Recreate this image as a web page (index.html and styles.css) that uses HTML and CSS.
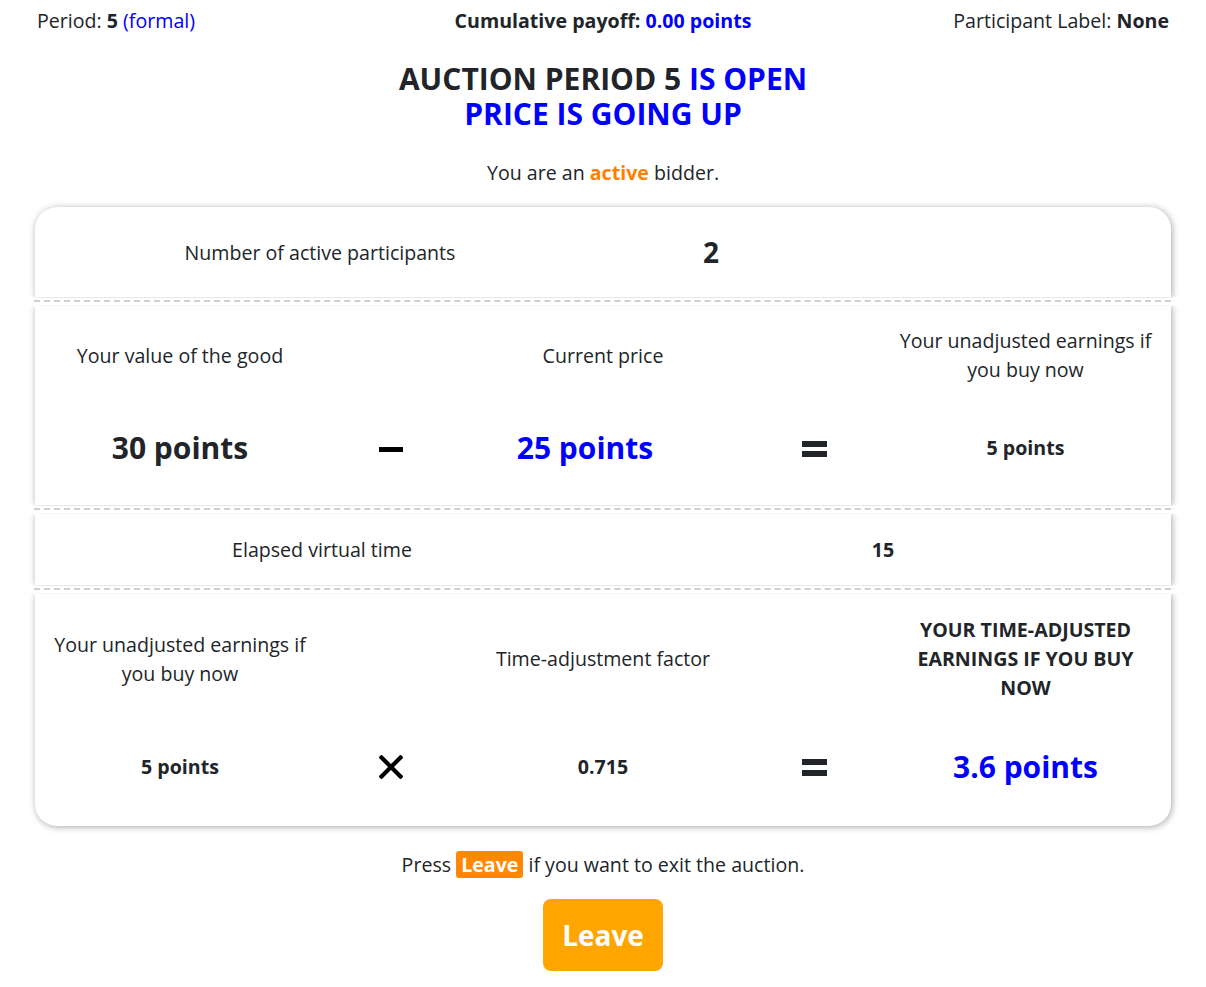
FILE: index.html
```html
<!DOCTYPE html>
<html lang="en">
<head>
<meta charset="utf-8">
<title>Auction</title>
<link rel="stylesheet" href="styles.css">
</head>
<body>
<div class="page">
  <div class="topbar">
    <div class="tb-left">Period: <b>5</b> <span class="blue">(formal)</span></div>
    <div class="tb-center"><b>Cumulative payoff: <span class="blue">0.00 points</span></b></div>
    <div class="tb-right">Participant Label: <b>None</b></div>
  </div>

  <h1 class="title">AUCTION PERIOD 5 <span class="blue">IS OPEN</span><br><span class="blue">PRICE IS GOING UP</span></h1>

  <p class="status">You are an <span class="orange">active</span> bidder.</p>

  <div class="card">
    <div class="sec sec-first row-participants">
      <div class="cell">Number of active participants</div>
      <div class="cell big-num">2</div>
      <div class="cell"></div>
    </div>
    <div class="sep"></div>
    <div class="sec calc calc-price">
      <div class="lab">Your value of the good</div>
      <div class="lab"></div>
      <div class="lab">Current price</div>
      <div class="lab"></div>
      <div class="lab">Your unadjusted earnings if you buy now</div>

      <div class="val big">30 points</div>
      <div class="val op">
        <svg width="24" height="24" viewBox="0 0 24 24"><rect x="0" y="11" width="24" height="5" fill="#000"/></svg>
      </div>
      <div class="val big blue price-val">25 points</div>
      <div class="val op">
        <svg width="25" height="24" viewBox="0 0 25 24"><rect x="0" y="5" width="25" height="6" fill="#212529"/><rect x="0" y="15" width="25" height="6" fill="#212529"/></svg>
      </div>
      <div class="val small">5 points</div>
    </div>
    <div class="sep"></div>
    <div class="sec row-time">
      <div class="cell">Elapsed virtual time</div>
      <div class="cell bold time-val">15</div>
    </div>
    <div class="sep"></div>
    <div class="sec sec-last calc calc-time">
      <div class="lab">Your unadjusted earnings if you buy now</div>
      <div class="lab"></div>
      <div class="lab">Time-adjustment factor</div>
      <div class="lab"></div>
      <div class="lab bold upper">Your time-adjusted earnings if you buy now</div>

      <div class="val small">5 points</div>
      <div class="val op">
        <svg width="24" height="24" viewBox="0 0 24 24"><path d="M2.5 2.5 L21.5 21.5 M21.5 2.5 L2.5 21.5" stroke="#000" stroke-width="4.2" stroke-linecap="square"/></svg>
      </div>
      <div class="val small">0.715</div>
      <div class="val op">
        <svg width="25" height="24" viewBox="0 0 25 24"><rect x="0" y="4" width="25" height="6" fill="#212529"/><rect x="0" y="15" width="25" height="6" fill="#212529"/></svg>
      </div>
      <div class="val big blue">3.6 points</div>
    </div>
  </div>

  <p class="press">Press <span class="badge">Leave</span> if you want to exit the auction.</p>
  <div class="btn-wrap"><button class="leave-btn" type="button">Leave</button></div>
</div>
</body>
</html>
```

FILE: styles.css
```css
html, body {
  margin: 0;
  padding: 0;
  background: #fff;
}
body {
  font-family: "Open Sans", "Noto Sans", sans-serif;
  font-size: 19.6px;
  color: #212529;
  line-height: 1.5;
}
.page {
  width: 1136px;
  margin: 0 auto;
}
.blue { color: #0000ff; }
.orange { color: #ff8000; font-weight: 700; }
.bold { font-weight: 700; }

.topbar {
  display: grid;
  grid-template-columns: 1fr auto 1fr;
  align-items: center;
  padding: 6px 2px 0;
  height: 30px;
}
.tb-center { text-align: center; }
.tb-right { text-align: right; }

.title {
  margin: 25px 0 0;
  text-align: center;
  font-size: 30px;
  line-height: 35px;
  font-weight: 700;
}
.status {
  margin: 27px 0 0;
  text-align: center;
}

.card {
  margin-top: 20px;
}
.sec {
  background: #fff;
  box-shadow: 1px 1px 7px rgba(0,0,0,0.35);
  clip-path: inset(0 -12px);
}
.sec-first {
  border-radius: 22px 22px 0 0;
  clip-path: inset(-12px -12px 0 -12px);
}
.sec-last {
  border-radius: 0 0 22px 22px;
  clip-path: inset(0 -12px -12px -12px);
}
.sep {
  margin: 3px 0;
  border-top: 2px dashed #d0d0d0;
  margin-left: -1px;
}

.row-participants {
  display: grid;
  grid-template-columns: 570px 212px 1fr;
  align-items: center;
  height: 90px;
}
.cell { text-align: center; }
.big-num {
  font-size: 28px;
  font-weight: 700;
}
.row-time {
  display: grid;
  grid-template-columns: 574px 1fr;
  align-items: center;
  height: 72px;
}
.time-val {
  padding-right: 14px;
}

.calc {
  display: grid;
  grid-template-columns: 290px 132px 292px 131px 291px;
  align-items: center;
}
.lab {
  text-align: center;
  padding: 21px 12px;
  line-height: 29px;
  align-self: stretch;
  display: flex;
  align-items: center;
  justify-content: center;
}
.calc-time .lab {
  padding-top: 22px;
  padding-bottom: 22px;
}
.upper { text-transform: uppercase; }
.val {
  text-align: center;
  padding: 20px 10px 37px;
  height: 45px;
  display: flex;
  align-items: center;
  justify-content: center;
  font-weight: 700;
  box-sizing: content-box;
}
.calc-price .val {
  padding-bottom: 35px;
}
.calc-price .price-val {
  padding-right: 46px;
}
.val.big { font-size: 30px; }
.val.small { font-size: 19.6px; }
.op svg { display: block; }

.press {
  margin: 24px 0 0;
  text-align: center;
}
.badge {
  display: inline-block;
  background: #ff8800;
  color: #fff;
  font-weight: 700;
  padding: 0 5px;
  border-radius: 3px;
  line-height: 27px;
}
.btn-wrap {
  text-align: center;
  margin-top: 19px;
}
.leave-btn {
  font-family: inherit;
  background: #ffa500;
  color: #fff;
  border: none;
  border-radius: 8px;
  width: 120px;
  height: 72px;
  font-size: 28px;
  font-weight: 700;
}
```
